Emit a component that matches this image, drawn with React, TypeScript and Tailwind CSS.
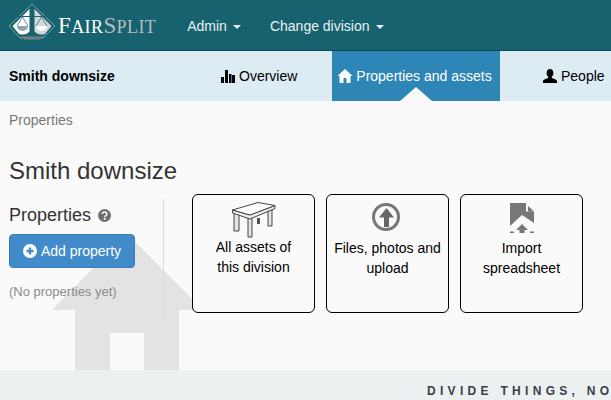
import React from 'react';

function Caret() {
  return <span className="ml-[6px] inline-block w-0 h-0 border-x-[4px] border-x-transparent border-t-[4px] border-t-[#e8f0f2] align-middle" />;
}

function Logo() {
  return (
    <div className="flex items-center">
      <svg width="46" height="38" viewBox="0 0 46 38" className="shrink-0 -mt-[8px]">
        <path d="M23 1 L46 23 L34 35 L11 35 L0 23 Z" fill="none" stroke="#7fa0a8" strokeWidth="1" />
        <path d="M21.500 5 L3.500 23 L10 31 Q18 33 21.500 27 Z" fill="#fff" />
        <path d="M24.500 5 L42.500 23 L36 31 Q28 33 24.500 27 Z" fill="#d2d8d9" />
        <path d="M20.500 3 h1.500 v25 h-1.500 z M24 3 h1.500 v25 h-1.500 z" fill="#17626f" />
        <path d="M9 13 h28 v1 h-28 z" fill="#17626f" />
        <path d="M8 23 h11 a5.500 5 0 0 1 -11 0 z" fill="#8ea6ab" />
        <path d="M27 23 h11 a5.500 5 0 0 1 -11 0 z" fill="#fff" />
        <path d="M13.500 14 L8 23 M13.500 14 L19 23 M32.500 14 L27 23 M32.500 14 L38 23" stroke="#3f6d77" strokeWidth="0.8" fill="none" />
        <path d="M12 34 h22 M15 36 h16" stroke="#8a807e" strokeWidth="1" />
      </svg>
      <div className="ml-[3px] font-['Liberation_Serif',serif] text-[23px] leading-none tracking-[0.4px]">
        <span className="text-white">F</span>
        <span className="text-white text-[18px]">AIR</span>
        <span className="text-[#b5bcbe]">S</span>
        <span className="text-[#b5bcbe] text-[18px]">PLIT</span>
      </div>
    </div>
  );
}

function Card({ icon, lines, low }: { icon: React.ReactNode; lines: string[]; low?: boolean }) {
  return (
    <div className="w-[123px] h-[119px] rounded-[6px] border border-black bg-[#fafafa] flex flex-col items-center pt-[7px] text-center text-[14px] leading-[20px] text-black">
      <div className="h-[35px] flex items-start justify-center">{icon}</div>
      <div className={low ? 'mt-[1px]' : 'mt-0'}>
        {lines.map((l) => <div key={l}>{l}</div>)}
      </div>
    </div>
  );
}

export default function App() {
  return (
    <div className="relative w-[611px] h-[400px] overflow-hidden bg-[#fafafa] font-['Liberation_Sans',Arial,sans-serif] text-[14px] text-[#333]">
      <div className="h-[51px] bg-[#17626f] border-b border-[#0e4653] flex items-center pl-[9px] pt-[1px]">
        <Logo />
        <div className="ml-[31px] mt-[2px] text-[#e8f0f2]">Admin<Caret /></div>
        <div className="ml-[29px] mt-[2px] text-[#e8f0f2]">Change division<Caret /></div>
      </div>

      <div className="h-[50px] bg-[#ddecf2] flex items-center relative">
        <div className="w-[220px] pl-[9px] font-bold text-black">Smith downsize</div>
        <div className="w-[112px] flex items-center text-black">
          <svg width="14" height="13" viewBox="0 0 14 13" className="mr-[4px] ml-[1px]"><path d="M0 7h3v6H0zM4 0h3v13H4zM8 4h2.500v9H8zM11 5h3v8h-3z" fill="#000" /></svg>
          Overview
        </div>
        <div className="relative w-[168px] h-full bg-[#2e86b6] flex items-center justify-center pr-[3px] text-white">
          <svg width="16" height="14" viewBox="0 0 15 14" className="mr-[3px]"><path d="M7.500 0 L15 7 L13 7 L13 14 L9 14 L9 9 L6 9 L6 14 L2 14 L2 7 L0 7 Z" fill="#fff" /></svg>
          Properties and assets
          <div className="absolute bottom-0 left-1/2 -translate-x-1/2 w-0 h-0 border-x-[16px] border-x-transparent border-b-[14px] border-b-[#fafafa]" />
        </div>
        <div className="ml-[43px] flex items-center text-black whitespace-nowrap">
          <svg width="14" height="14" viewBox="0 0 14 14" className="mr-[4px]"><path d="M7 0c2.200 0 3.400 1.800 3.400 4 0 1.600-.7 3-1.600 3.800v1.200c1.200.7 5.200 1.400 5.200 3.200V14H0v-1.800c0-1.800 4-2.500 5.200-3.200V7.800C4.300 7 3.600 5.600 3.600 4 3.600 1.800 4.800 0 7 0z" fill="#000" /></svg>
          People
        </div>
      </div>

      <div className="relative h-[269px]">
        <svg width="151" height="136" viewBox="0 0 151 136" className="absolute left-[52px] top-[133px]">
          <path d="M75.500 0 L151 76 L127 76 L127 136 L92 136 L92 99 L58 99 L58 136 L23 136 L23 76 L0 76 Z" fill="#e3e3e3" />
        </svg>
        <div className="relative">
          <div className="pl-[9px] pt-[9px] leading-[20px] text-[#777]">Properties</div>
          <h1 className="pl-[9px] mt-[28px] text-[24px] leading-[26px] text-[#333]">Smith downsize</h1>
          <div className="flex mt-[10px]">
            <div className="w-[155px] ml-[9px] h-[121px] mt-[5px] border-r border-[#ddd]">
              <div className="flex items-center text-[18px] leading-[20px] mt-[6px]">
                Properties
                <svg width="13" height="13" viewBox="0 0 13 13" className="ml-[7px]">
                  <circle cx="6.500" cy="6.500" r="6.500" fill="#6f6f6f" />
                  <path d="M4.300 5 a2.300 2 0 1 1 3.500 1.700 c-.8.5-1 .8-1 1.500" fill="none" stroke="#fafafa" strokeWidth="1.500" />
                  <rect x="5.700" y="9" width="1.800" height="1.800" fill="#fafafa" />
                </svg>
              </div>
              <button className="mt-[9px] w-[126px] h-[34px] rounded-[4px] bg-[#428bca] border border-[#357ebd] text-white flex items-center justify-center">
                <svg width="14" height="14" viewBox="0 0 14 14" className="mr-[4px]">
                  <circle cx="7" cy="7" r="7" fill="#fff" />
                  <path d="M3.500 5.800h7v2.400h-7z M5.800 3.500h2.400v7H5.800z" fill="#428bca" />
                </svg>
                Add property
              </button>
              <div className="mt-[15px] text-[13px] leading-[18px] text-[#8a8a8a]">(No properties yet)</div>
            </div>
            <div className="ml-[28px] flex gap-[11px]">
              <Card
                lines={['All assets of', 'this division']}
                icon={
                  <svg width="44" height="36" viewBox="0 0 44 36">
                    <path d="M25 16 h3 v6 h-3 z" fill="#555" />
                    <path d="M2 10 h5 v19 h-5 z M16 15 h4 v20 h-4 z M36 7 h4 v17 h-4 z" fill="#e4e4e4" stroke="#444" strokeWidth="1" />
                    <path d="M0.500 8 V11 L18 17 L43 6.500 V3.500 L18 13 Z" fill="#ececec" stroke="#444" strokeWidth="1" />
                    <path d="M0.500 8 L26 0.500 L43 3.500 L18 13 Z" fill="#fff" stroke="#444" strokeWidth="1" />
                  </svg>
                }
              />
              <Card
                low
                lines={['Files, photos and', 'upload']}
                icon={
                  <svg width="28" height="28" viewBox="0 0 28 28" className="mt-[1px] mr-[3px]">
                    <circle cx="14" cy="14" r="12.500" fill="none" stroke="#777" strokeWidth="3" />
                    <path d="M14.500 5 L22 14.500 L17 14.500 L17 24 L12 24 L12 14.500 L7 14.500 Z" fill="#666" />
                  </svg>
                }
              />
              <Card
                low
                lines={['Import', 'spreadsheet']}
                icon={
                  <svg width="24" height="30" viewBox="0 0 24 30" className="mt-[1px]">
                    <path d="M0 0 H16 V8.500 H24 V20 L12 12 L0 23 Z" fill="#777" />
                    <path d="M18 3 L24 8.500 H18 Z" fill="#777" />
                    <path d="M12 21 L18 27 H14.500 V30 H9.500 V27 H6 Z" fill="#777" />
                    <path d="M0 28.500 H4 V30 H0 Z M20 28.500 H24 V30 H20 Z" fill="#777" />
                  </svg>
                }
              />
            </div>
          </div>
        </div>
      </div>

      <div className="relative h-[30px] bg-[#ecf0f1] pl-[427px] pt-[14px] whitespace-nowrap text-[12px] leading-[14px] font-bold tracking-[4.3px] text-[#3a3f4a]">
        DIVIDE THINGS, NOT FAMILIES
      </div>
    </div>
  );
}
